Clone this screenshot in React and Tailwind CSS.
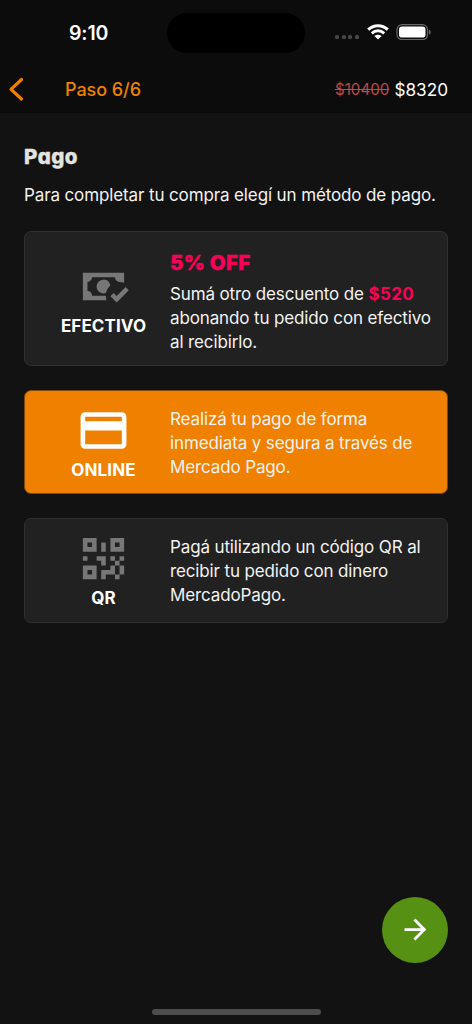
import { useState } from 'react';

const icons = {
  cash: 'M3 6V18H13.32C13.1 17.33 13 16.66 13 16H7C7 14.9 6.11 14 5 14V10C6.11 10 7 9.11 7 8H17C17 9.11 17.9 10 19 10V10.06C19.67 10.06 20.34 10.18 21 10.4V6H3M12 9C10.3 9.03 9 10.3 9 12C9 13.7 10.3 14.94 12 15C12.38 15 12.77 14.92 13.14 14.77C13.41 13.67 13.86 12.63 14.97 11.61C14.85 10.28 13.59 8.97 12 9M21.63 12.27L17.76 16.17L16.41 14.8L15 16.22L17.75 19L23.03 13.68L21.63 12.27Z',
  card: 'M20 4H4C2.89 4 2 4.89 2 6V18C2 19.11 2.9 20 4 20H20C21.11 20 22 19.11 22 18V6C22 4.89 21.11 4 20 4M20 18H4V12H20V18M20 8H4V6H20V8Z',
  qr: 'M3,11H5V13H3V11M11,5H13V9H11V5M9,11H13V15H11V13H9V11M15,11H17V13H19V11H21V13H19V15H21V19H19V21H17V19H13V21H11V17H15V15H17V13H15V11M19,19V15H17V19H19M15,3H21V9H15V3M17,5V7H19V5H17M3,3H9V9H3V3M5,5V7H7V5H5M3,15H9V21H3V15M5,17V19H7V17H5Z',
};

function StatusBar() {
  return (
    <div className="flex h-[65px] items-start">
      <div className="w-[167px] pl-[69px] pt-[19px] text-[19.5px] font-semibold leading-[28px] tracking-[-0.15px] text-white">9:10</div>
      <div className="mt-[13px] h-[40px] w-[138px] rounded-full bg-black" />
      <div className="ml-[30px] mt-[24px] flex">
        <div className="mt-[11px] flex gap-[2.5px]">
          <span className="h-[4px] w-[4px] rounded-[1.5px] bg-[#48484a]" />
          <span className="h-[4px] w-[4px] rounded-[1.5px] bg-[#48484a]" />
          <span className="h-[4px] w-[4px] rounded-[1.5px] bg-[#48484a]" />
          <span className="h-[4px] w-[4px] rounded-[1.5px] bg-[#48484a]" />
        </div>
        <svg className="ml-[8px] h-[16px] w-[22px]" viewBox="0 0 22 16" fill="none" stroke="#fff" strokeWidth="3">
          <path d="M1.2 5.6C6.8 .3 15.2 .3 20.8 5.6" />
          <path d="M4.8 9.3C8.4 6 13.6 6 17.2 9.3" />
          <path d="M11 15.6L7.4 12C9.4 10.2 12.6 10.2 14.6 12Z" fill="#fff" stroke="none" />
        </svg>
        <svg className="ml-[7px] h-[16px] w-[36px]" viewBox="0 0 36 16">
          <rect x="1" y=".6" width="30.5" height="15" rx="5" fill="none" stroke="#68686a" strokeWidth="1.2" />
          <rect x="3" y="2.6" width="26.5" height="11" rx="3.2" fill="#fff" />
          <path d="M33 5.5C35.3 6.5 35.3 9.7 33 10.7Z" fill="#68686a" />
        </svg>
      </div>
    </div>
  );
}

function Method({ icon, label, active, height, onClick, children }) {
  return (
    <button
      type="button"
      onClick={onClick}
      className={`flex w-full items-center rounded-[7px] border text-left ${height} ${
        active ? 'border-[#7d480c] bg-[#f08000]' : 'border-[#303030] bg-[#212121]'
      }`}
    >
      <div className="flex w-[145px] shrink-0 flex-col items-center pl-[12px]">
        <svg viewBox="0 0 24 24" className={`h-[55px] w-[55px] ${active ? 'fill-white' : 'fill-[#777777]'}`}>
          <path d={icons[icon]} />
        </svg>
        <span className="text-[17px] font-bold leading-[24px] tracking-[0.1px] text-white">{label}</span>
      </div>
      <div className="whitespace-nowrap pt-px text-[17px] leading-[24px] tracking-[-0.13px] text-[#f2f2f2]">{children}</div>
    </button>
  );
}

export default function App() {
  const [method, setMethod] = useState('online');

  return (
    <div className="flex h-[1024px] w-[472px] flex-col overflow-hidden bg-[#121212] font-['Inter',sans-serif]">
      <header className="h-[113px] bg-[#0c0c0c]">
        <StatusBar />
        <div className="flex h-[48px] items-center pl-[9px] pr-[24px]">
          <svg className="h-[24px] w-[15px]" viewBox="0 0 15 24" fill="none" stroke="#f08000" strokeWidth="3.1" strokeLinecap="round" strokeLinejoin="round">
            <path d="M12.5 2.5L2 12.3L12.5 22" />
          </svg>
          <span className="ml-[41px] text-[18px] font-medium tracking-[-0.05px] text-[#f08000]">Paso 6/6</span>
          <span className="ml-auto pt-[2px] text-[15.2px] text-[#b94a4a] line-through">$10400</span>
          <span className="ml-[5px] pt-px text-[17.2px] text-white">$8320</span>
        </div>
      </header>

      <main className="flex-1 px-[24px] pt-[30px]">
        <h1 className="text-[20.5px] font-extrabold leading-[28px] tracking-[0.5px] text-[#e3e3df] [-webkit-text-stroke:0.4px_#e3e3df] [font-feature-settings:'cv11','ss03']">Pago</h1>
        <p className="mt-[12px] whitespace-nowrap text-[17px] leading-[24px] tracking-[-0.12px] text-[#f2f2f2]">
          Para completar tu compra elegí un método de pago.
        </p>

        <div className="mt-[24px] flex flex-col gap-[24px]">
          <Method icon="cash" label="EFECTIVO" height="h-[135px]" active={method === 'cash'} onClick={() => setMethod('cash')}>
            <div className="mb-[5px] pt-[4px] text-[20.5px] font-extrabold leading-[28px] tracking-[0.3px] text-[#fb0059] [-webkit-text-stroke:0.5px_#fb0059] [font-feature-settings:'ss03']">5% OFF</div>
            Sumá otro descuento de <b className="font-bold tracking-[0.3px] text-[#fb0059]">$520</b>
            <br />
            abonando tu pedido con efectivo
            <br />
            al recibirlo.
          </Method>
          <Method icon="card" label="ONLINE" height="h-[104px]" active={method === 'online'} onClick={() => setMethod('online')}>
            Realizá tu pago de forma
            <br />
            inmediata y segura a través de
            <br />
            Mercado Pago.
          </Method>
          <Method icon="qr" label="QR" height="h-[105px]" active={method === 'qr'} onClick={() => setMethod('qr')}>
            Pagá utilizando un código QR al
            <br />
            recibir tu pedido con dinero
            <br />
            MercadoPago.
          </Method>
        </div>
      </main>

      <footer className="flex flex-col">
        <button type="button" className="mr-[24px] flex h-[66px] w-[66px] items-center justify-center self-end rounded-full bg-[#579113] pb-px">
          <svg className="h-[33px] w-[33px] fill-white" viewBox="0 0 24 24">
            <path d="M4,11V13H16L10.5,18.5L11.92,19.92L19.84,12L11.92,4.08L10.5,5.5L16,11H4Z" />
          </svg>
        </button>
        <div className="mb-[9px] mt-[46px] h-[6px] w-[169px] self-center rounded-full bg-[#4d4d4d]" />
      </footer>
    </div>
  );
}
